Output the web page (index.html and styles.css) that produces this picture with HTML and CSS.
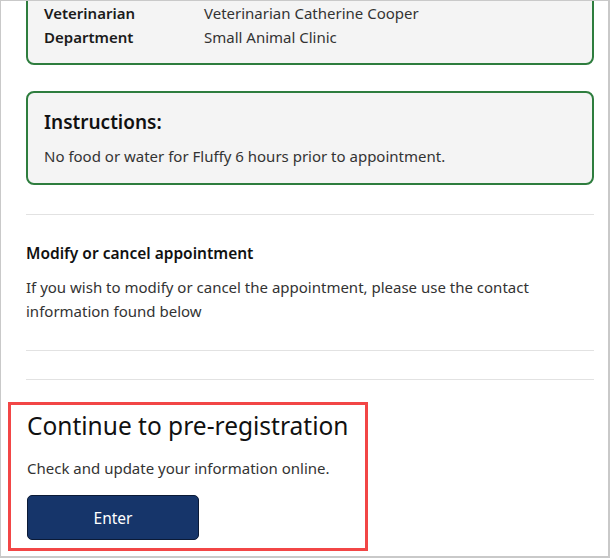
FILE: index.html
```html
<!DOCTYPE html>
<html lang="en">
<head>
<meta charset="utf-8">
<title>Appointment</title>
<link rel="stylesheet" href="styles.css">
</head>
<body>
<div class="frame">
  <div class="content">
    <div class="card card-details">
      <div class="row"><span class="label">Veterinarian</span><span class="value">Veterinarian Catherine Cooper</span></div>
      <div class="row"><span class="label">Department</span><span class="value">Small Animal Clinic</span></div>
    </div>
    <div class="card card-instructions">
      <h2 class="card-title">Instructions:</h2>
      <p class="card-text">No food or water for Fluffy 6 hours prior to appointment.</p>
    </div>
    <hr class="divider divider-first">
    <section class="modify">
      <h3 class="modify-title">Modify or cancel appointment</h3>
      <p class="modify-text">If you wish to modify or cancel the appointment, please use the contact information found below</p>
    </section>
    <hr class="divider divider-second">
    <hr class="divider divider-third">
    <section class="prereg">
      <h2 class="prereg-title">Continue to pre-registration</h2>
      <p class="prereg-text">Check and update your information online.</p>
      <button class="btn-enter" type="button">Enter</button>
    </section>
  </div>
</div>
</body>
</html>
```
FILE: styles.css
```css
* { box-sizing: border-box; }
html, body { margin: 0; padding: 0; background: #fff; }
body {
  font-family: "Noto Sans", "Open Sans", "Liberation Sans", sans-serif;
  color: #333;
}
.frame {
  width: 610px;
  height: 558px;
  border-style: solid;
  border-color: #c9c9c9;
  border-width: 1px 2px 2px 1px;
  overflow: hidden;
}
.content {
  padding: 0 14px 0 25px;
}
.card {
  border: 2px solid #2e7d3e;
  border-radius: 8px;
  background: #f4f4f4;
}
.card-details {
  margin-top: -18px;
  padding: 16px 16px 14px 16px;
}
.row {
  display: flex;
  height: 24px;
  line-height: 24px;
  font-size: 15px;
}
.label {
  width: 160px;
  font-weight: 600;
  color: #1b1b1b;
}
.value { color: #333; }
.card-instructions {
  margin-top: 26px;
  padding: 15px 16px;
}
.card-title {
  margin: 0 0 8px 0;
  font-size: 19px;
  line-height: 28px;
  font-weight: 600;
  color: #111;
}
.card-text {
  margin: 0;
  font-size: 15px;
  line-height: 24px;
  color: #333;
}
.divider {
  border: 0;
  height: 1px;
  background: #e2e2e2;
  margin: 0;
}
.divider-first { margin-top: 29px; }
.modify { padding-top: 27px; }
.modify-title {
  margin: 0 0 11px 0;
  font-size: 15.5px;
  line-height: 22px;
  font-weight: 600;
  color: #111;
}
.modify-text {
  margin: 0;
  font-size: 15px;
  line-height: 24px;
  color: #333;
  max-width: 540px;
}
.divider-second { margin-top: 27px; }
.divider-third { margin-top: 28px; }
.prereg {
  margin: 22px 0 0 -18px;
  width: 360px;
  border: 3px solid #f24646;
  padding: 4px 8px 8px 16px;
}
.prereg-title {
  margin: 0 0 13px 0;
  font-size: 24.5px;
  line-height: 34px;
  font-weight: 400;
  color: #111;
  white-space: nowrap;
}
.prereg-text {
  margin: 0 0 15px 0;
  font-size: 15px;
  line-height: 24px;
  color: #333;
}
.btn-enter {
  display: block;
  width: 172px;
  height: 45px;
  background: #16356a;
  border: 1px solid #0b1a36;
  border-radius: 5px;
  color: #fff;
  font-family: inherit;
  font-size: 15.5px;
  padding: 0;
}
```
